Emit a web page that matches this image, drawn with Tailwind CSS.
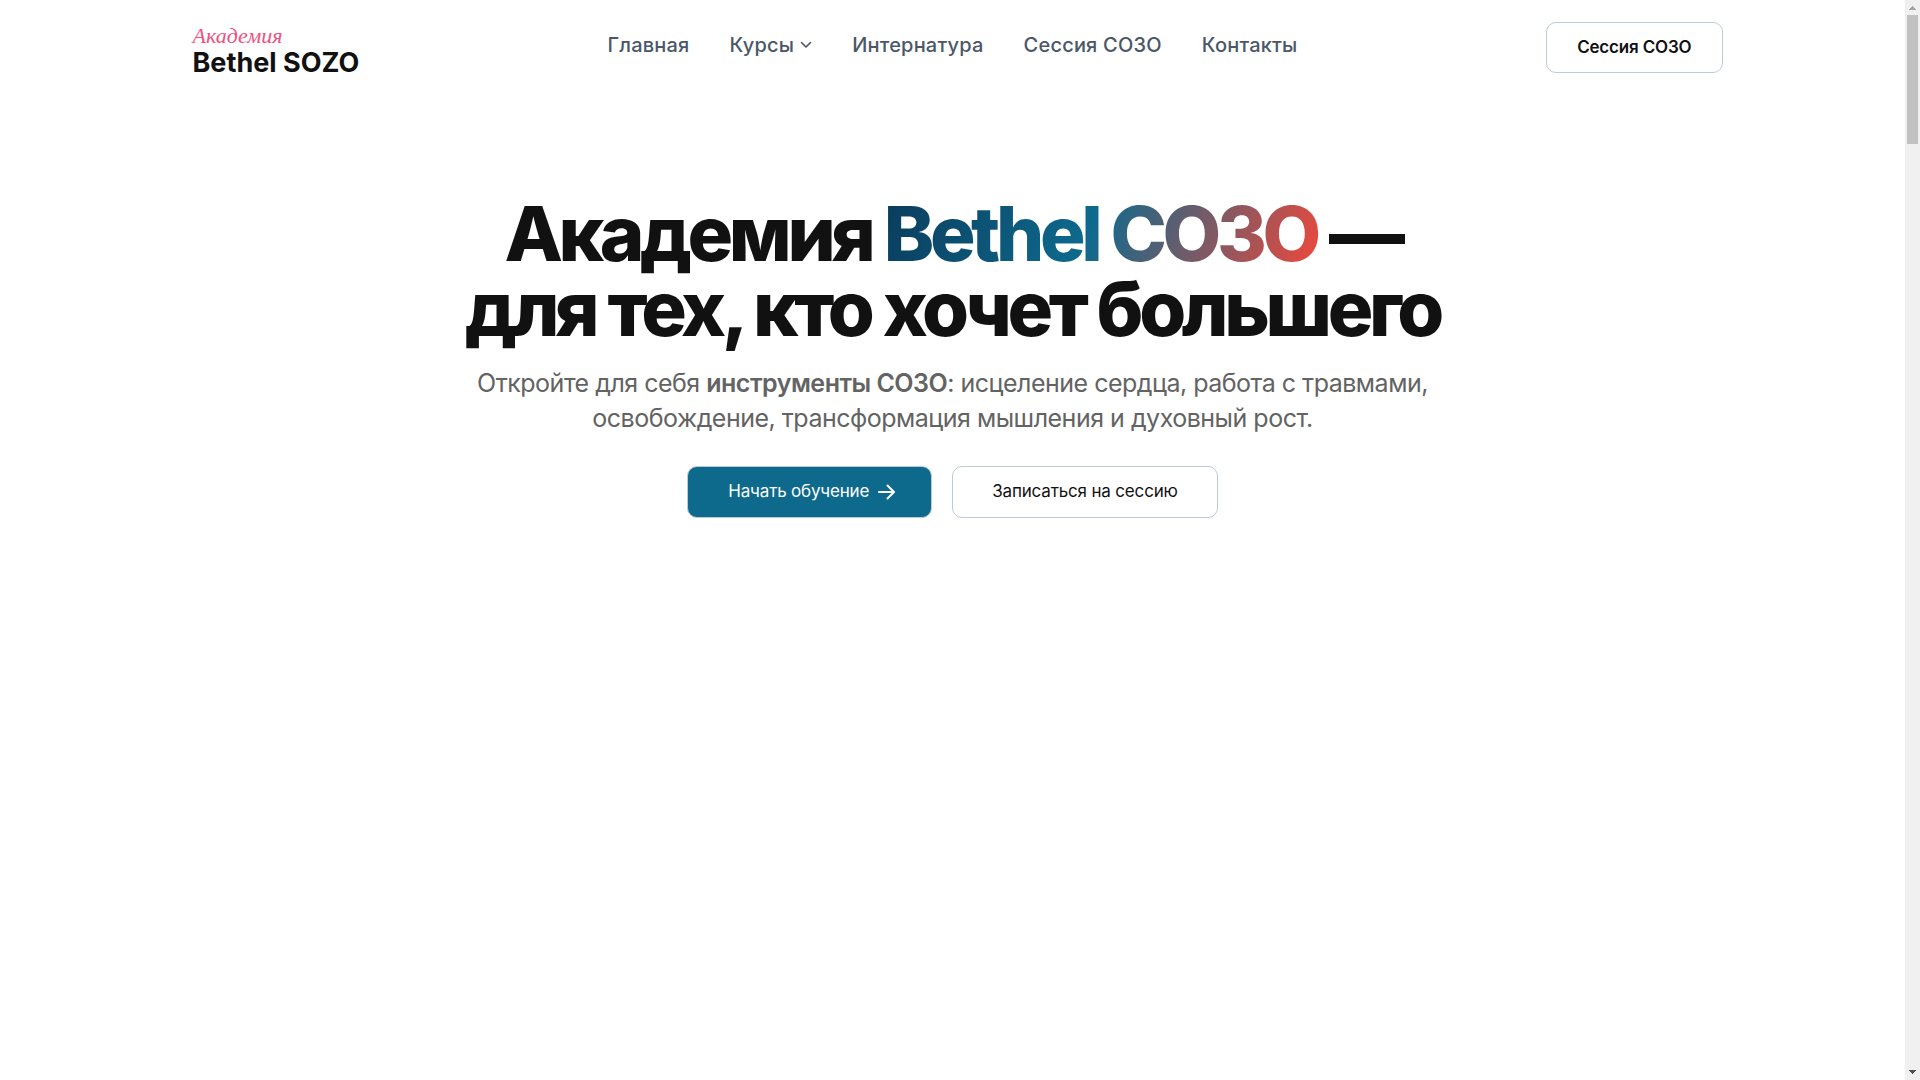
<!DOCTYPE html>
<html lang="ru">
<head>
  <meta charset="UTF-8">
  <meta name="viewport" content="width=device-width, initial-scale=1.0">
  <title>Академия Bethel СОЗО</title>
  <script src="https://cdn.jsdelivr.net/npm/@tailwindcss/browser@4"></script>
  <style>
      body { font-family: 'Inter', sans-serif; }
  </style>
</head>
<body class="flex min-h-screen bg-white text-[#111111]">
  <div class="flex-1 min-w-0">
    <header class="pt-[22px]">
      <div class="max-w-[1540px] mx-auto grid grid-cols-[1fr_auto_1fr] items-start">
        <a href="#" class="flex flex-col pl-[10px]">
          <span class="font-['Liberation_Serif',serif] italic text-[22px] leading-[27px] text-[#f0527f]">Академия</span>
          <span class="font-bold text-[27px] leading-[28px] whitespace-nowrap">Bethel SOZO</span>
        </a>

        <nav class="flex items-center gap-10 pt-[8px] text-[20px] leading-[30px] font-medium tracking-[0.01em] text-[#4b5768]">
          <a href="#">Главная</a>
          <a href="#" class="flex items-center gap-[6px]">Курсы
            <svg class="w-[12px] h-[12px]" viewBox="0 0 12 12" fill="none" stroke="currentColor" stroke-width="1.6" stroke-linecap="round" stroke-linejoin="round"><path d="M1.5 3.500l4.500 4.500L10.500 3.500"/></svg>
          </a>
          <a href="#">Интернатура</a>
          <a href="#">Сессия СОЗО</a>
          <a href="#">Контакты</a>
        </nav>

        <a href="#" class="justify-self-end flex items-center h-[51px] px-[30px] border border-[#bccbdc] rounded-[10px] font-semibold text-[17px] tracking-[-0.01em]">Сессия СОЗО</a>
      </div>
    </header>

    <main class="pt-[119px] px-6 flex flex-col items-center text-center">
      <h1 class="font-extrabold text-[76px] leading-[75px] tracking-[-0.058em]">
        Академия <span class="pr-1 -mr-1 text-transparent bg-clip-text bg-[linear-gradient(110deg,#0b3b5c,#0d6a8d_47%,#f4483a)]">Bethel СОЗО</span> —<br>
        для тех, кто хочет большего
      </h1>
      <p class="mt-[20px] max-w-[1000px] text-[25px] leading-[35px] tracking-[-0.02em] text-[#636363]">
        Откройте для себя <strong class="font-semibold">инструменты СОЗО</strong>: исцеление сердца, работа с травмами, освобождение, трансформация мышления и духовный рост.
      </p>
      <div class="mt-[30px] flex flex-wrap justify-center gap-5 text-[17px] tracking-[-0.01em]">
        <a href="#" class="flex items-center gap-[9px] h-[52px] pl-10 pr-9 border border-[#bccbdc] rounded-[10px] bg-[#0d6a8d] text-white">Начать обучение
          <svg class="w-[17px] h-[16px]" viewBox="0 0 17 16" fill="none" stroke="currentColor" stroke-width="2" stroke-linecap="round" stroke-linejoin="round"><path d="M1 8h15M9.500 1.500L16 8l-6.500 6.500"/></svg>
        </a>
        <a href="#" class="flex items-center h-[52px] px-[39px] border border-[#bccbdc] rounded-[10px]">Записаться на сессию</a>
      </div>
    </main>
  </div>

  <!-- scrollbar -->
  <div class="w-[15px] shrink-0 bg-[#f0f0f0] flex flex-col items-center justify-between" aria-hidden="true">
    <div class="w-full flex flex-col items-center">
      <svg class="w-[15px] h-[15px]" viewBox="0 0 15 15" fill="#a3a3a3"><path d="M7 6h1v1h1v1h1v1h1v1H4V9h1V8h1V7h1z"/></svg>
      <div class="w-[11px] h-[129px] bg-[#c1c1c1]"></div>
    </div>
    <svg class="w-[15px] h-[15px]" viewBox="0 0 15 15" fill="#505050"><path d="M4 5h7v1h-1v1H9v1H8v1H7V8H6V7H5V6H4z"/></svg>
  </div>
</body>
</html>
